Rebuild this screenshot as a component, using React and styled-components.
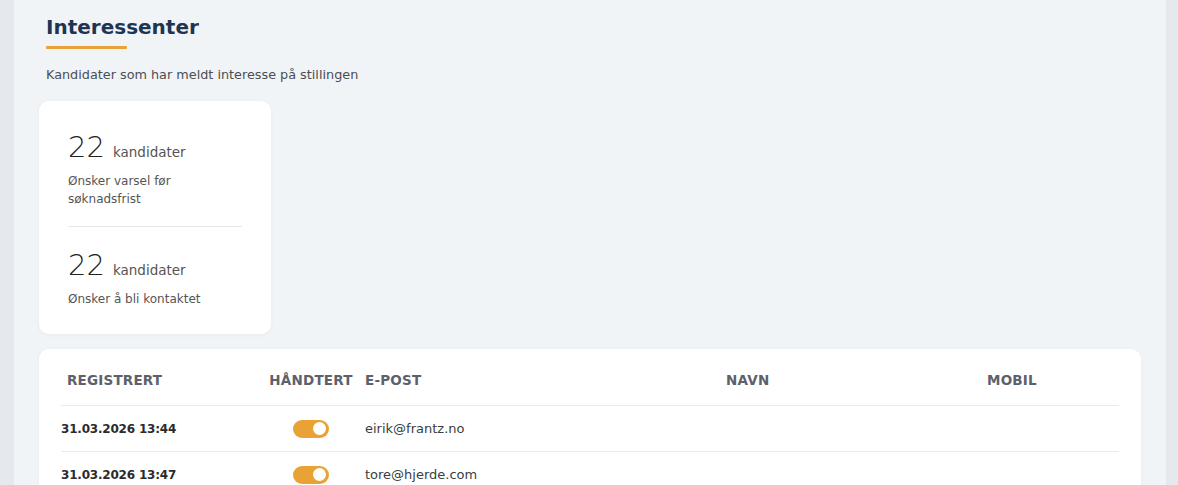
import React from "react";
import styled, { createGlobalStyle } from "styled-components";

const Global = createGlobalStyle`
  html, body { margin: 0; padding: 0; background: #e5e9ee; }
  body { font-family: "DejaVu Sans", "Noto Sans", sans-serif; }
`;

const Page = styled.div`
  padding: 0 12px 0 14px;
  height: 485px;
  overflow: hidden;
`;

const Panel = styled.main`
  background: #f1f4f6;
  height: 100%;
  padding: 12px 25px 0 25px;
  box-sizing: border-box;
`;

const Header = styled.header`
  padding-left: 7px;
`;

const Title = styled.h2`
  margin: 0;
  font-size: 20px;
  font-weight: 700;
  color: #1d3552;
  line-height: 30px;
`;

const Underline = styled.div`
  width: 81px;
  height: 3px;
  background: #e8a236;
  margin-top: 4px;
  border-radius: 1px;
`;

const Subtitle = styled.p`
  margin: 18px 0 0;
  font-size: 12.8px;
  color: #4a4e55;
  line-height: 16px;
`;

const StatCard = styled.section`
  margin-top: 18px;
  width: 232px;
  box-sizing: border-box;
  background: #fff;
  border-radius: 10px;
  padding: 28px 29px 26px;
  box-shadow: 0 1px 4px rgba(30, 40, 60, 0.04);
`;

const Stat = styled.div`
  padding: ${(p) => (p.$first ? "0 0 18px" : "20px 0 0")};
  border-top: ${(p) => (p.$first ? "none" : "1px solid #e6e8eb")};
`;

const StatLine = styled.div`
  display: flex;
  align-items: baseline;
  gap: 8px;
`;

const Number = styled.span`
  font-size: 29px;
  font-weight: 300;
  color: #222;
  line-height: 36px;
`;

const Unit = styled.span`
  font-size: 13.5px;
  color: #555;
`;

const StatLabel = styled.div`
  margin-top: 7px;
  font-size: 12px;
  line-height: 18px;
  color: #555;
  max-width: 150px;
`;

const TableCard = styled.section`
  margin-top: 15px;
  background: #fff;
  border-radius: 10px 10px 0 0;
  padding: 6px 22px 0;
  box-shadow: 0 1px 4px rgba(30, 40, 60, 0.04);
`;

const Table = styled.table`
  width: 100%;
  border-collapse: collapse;
  table-layout: fixed;
`;

const Th = styled.th`
  text-align: ${(p) => p.$align || "left"};
  font-size: 13.5px;
  font-weight: 700;
  color: #5d616b;
  text-transform: uppercase;
  letter-spacing: 0.2px;
  height: 50px;
  padding: 0 0 0 ${(p) => p.$pl || 0}px;
  border-bottom: 1px solid #e8eaed;
  width: ${(p) => p.$w || "auto"};
  white-space: nowrap;
`;

const Td = styled.td`
  text-align: ${(p) => p.$align || "left"};
  font-size: ${(p) => (p.$bold ? "12px" : "13px")};
  letter-spacing: ${(p) => (p.$bold ? "-0.2px" : "0")};
  height: 45px;
  padding: 0;
  font-weight: ${(p) => (p.$bold ? 700 : 400)};
  color: ${(p) => (p.$bold ? "#2b2b2b" : "#3a3d42")};
  border-bottom: 1px solid #e8eaed;
`;

const Toggle = styled.span`
  display: inline-flex;
  align-items: center;
  justify-content: ${(p) => (p.$on ? "flex-end" : "flex-start")};
  width: 36px;
  height: 18px;
  border-radius: 9px;
  background: ${(p) => (p.$on ? "#e8a236" : "#ccc")};
  padding: 0 3px;
  box-sizing: border-box;
  vertical-align: middle;
`;

const Knob = styled.span`
  width: 13px;
  height: 13px;
  border-radius: 50%;
  background: #fff;
`;

const rows = [
  { date: "31.03.2026 13:44", email: "eirik@frantz.no" },
  { date: "31.03.2026 13:47", email: "tore@hjerde.com" },
];

export default function App() {
  return (
    <>
      <Global />
      <Page>
        <Panel>
          <Header>
            <Title>Interessenter</Title>
            <Underline />
            <Subtitle>Kandidater som har meldt interesse på stillingen</Subtitle>
          </Header>
          <StatCard>
            <Stat $first>
              <StatLine>
                <Number>22</Number>
                <Unit>kandidater</Unit>
              </StatLine>
              <StatLabel>Ønsker varsel før søknadsfrist</StatLabel>
            </Stat>
            <Stat>
              <StatLine>
                <Number>22</Number>
                <Unit>kandidater</Unit>
              </StatLine>
              <StatLabel>Ønsker å bli kontaktet</StatLabel>
            </Stat>
          </StatCard>
          <TableCard>
            <Table>
              <thead>
                <tr>
                  <Th $pl={6} $w="190px">Registrert</Th>
                  <Th $align="center" $w="108px">Håndtert</Th>
                  <Th $w="361px">E-post</Th>
                  <Th $w="261px">Navn</Th>
                  <Th>Mobil</Th>
                </tr>
              </thead>
              <tbody>
                {rows.map((r) => (
                  <tr key={r.date}>
                    <Td $bold>{r.date}</Td>
                    <Td $align="center">
                      <Toggle $on>
                        <Knob />
                      </Toggle>
                    </Td>
                    <Td>{r.email}</Td>
                    <Td />
                    <Td />
                  </tr>
                ))}
              </tbody>
            </Table>
          </TableCard>
        </Panel>
      </Page>
    </>
  );
}
